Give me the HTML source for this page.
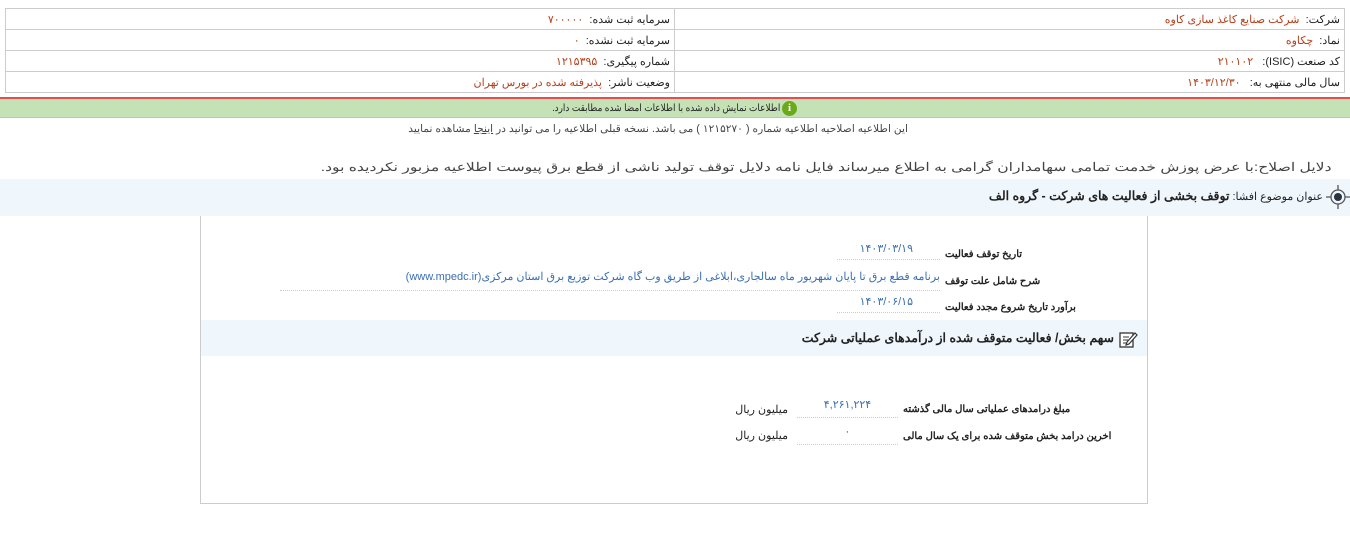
<!DOCTYPE html>
<html><head><meta charset="utf-8"><style>
*{margin:0;padding:0;box-sizing:border-box}
body{width:1350px;height:547px;background:#fff;position:relative;overflow:hidden;font-family:"Liberation Sans","Noto Sans CJK SC",sans-serif;font-size:11px;color:#222;direction:rtl}
.a{position:absolute;white-space:nowrap}
.r{color:#b5401a}
.b{color:#3a6fb0}
table.t{position:absolute;left:5px;top:8px;width:1340px;border-collapse:collapse}
table.t td{border:1px solid #ccc;height:21px;padding:0 4px;vertical-align:middle;font-size:11px}
.dot{border-bottom:1px dotted #ccc}
.lb{font-weight:bold;font-size:10px;direction:rtl}
</style></head><body>
<table class="t">
<tr><td style="width:670px">شرکت:&nbsp; <span class="r">شرکت صنایع کاغذ سازی کاوه</span></td><td>سرمایه ثبت شده:&nbsp; <span class="r">۷۰۰۰۰۰</span></td></tr>
<tr><td>نماد:&nbsp; <span class="r">چکاوه</span></td><td>سرمایه ثبت نشده:&nbsp; <span class="r">۰</span></td></tr>
<tr><td>کد صنعت (ISIC):&nbsp;&nbsp; <span class="r">۲۱۰۱۰۲</span></td><td>شماره پیگیری:&nbsp; <span class="r">۱۲۱۵۳۹۵</span></td></tr>
<tr><td>سال مالی منتهی به:&nbsp;&nbsp; <span class="r">۱۴۰۳/۱۲/۳۰</span></td><td>وضعیت ناشر:&nbsp; <span class="r">پذیرفته شده در بورس تهران</span></td></tr>
</table>
<div class="a" style="left:0;top:97px;width:1350px;height:2px;background:#e84c4c"></div>
<div class="a" style="left:0;top:99px;width:1350px;height:19px;background:#c4e2b6;border-bottom:1px solid #b0d0a0"></div>
<div class="a" style="left:782px;top:101px;width:15px;height:15px;border-radius:50%;background:#6aaa1a;color:#fff;font-weight:bold;font-size:11px;text-align:center;line-height:15px;font-family:'Liberation Serif',serif">i</div>
<div class="a" style="right:570px;top:101px;font-size:10px;line-height:15px;transform:scaleX(0.89);transform-origin:right center">اطلاعات نمایش داده شده با اطلاعات امضا شده مطابقت دارد.</div>
<div class="a" style="right:442px;top:122px;font-size:10.7px;color:#444">این اطلاعیه اصلاحیه اطلاعیه شماره ( ۱۲۱۵۲۷۰ ) می باشد. نسخه قبلی اطلاعیه را می توانید در <u>اینجا</u> مشاهده نمایید</div>
<div class="a" style="right:18px;top:160px;font-size:12px;color:#444;transform:scaleX(1.3);transform-origin:right center">دلایل اصلاح:با عرض پوزش خدمت تمامی سهامداران گرامی به اطلاع میرساند فایل نامه دلایل توقف تولید ناشی از قطع برق پیوست اطلاعیه مزبور نکردیده بود.</div>
<div class="a" style="left:0;top:179px;width:1350px;height:37px;background:#eff6fc"></div>
<svg class="a" style="left:1326px;top:185px" width="24" height="24" viewBox="0 0 24 24"><circle cx="12" cy="12" r="7" fill="none" stroke="#555" stroke-width="1.3"/><circle cx="12" cy="12" r="4" fill="#2a3340"/><path d="M12 0v5M12 19v5M0 12h5M19 12h5" stroke="#555" stroke-width="1.3"/></svg>
<div class="a" style="right:27px;top:188px;font-size:11px">عنوان موضوع افشا: <b style="font-size:12.5px">توقف بخشی از فعالیت های شرکت - گروه الف</b></div>
<div class="a" style="left:200px;top:216px;width:948px;height:288px;border:1px solid #ccc;border-top:none"></div>
<div class="a lb" style="left:945px;top:249px">تاریخ توقف فعالیت</div>
<div class="a b dot" style="left:837px;top:242px;width:103px;height:18px;text-align:right;padding-right:27px">۱۴۰۳/۰۳/۱۹</div>
<div class="a lb" style="left:945px;top:276px">شرح شامل علت توقف</div>
<div class="a b dot" style="left:280px;top:270px;width:660px;height:21px;text-align:right;padding-right:0">برنامه قطع برق تا پایان شهریور ماه سالجاری،ابلاغی از طریق وب گاه شرکت توزیع برق استان مرکزی(www.mpedc.ir)</div>
<div class="a lb" style="left:945px;top:302px">برآورد تاریخ شروع مجدد فعالیت</div>
<div class="a b dot" style="left:837px;top:295px;width:103px;height:18px;text-align:right;padding-right:27px">۱۴۰۳/۰۶/۱۵</div>
<div class="a" style="left:201px;top:320px;width:946px;height:36px;background:#eff6fc"></div>
<svg class="a" style="left:1118px;top:329px" width="20" height="20" viewBox="0 0 20 20"><rect x="2" y="4" width="13" height="14" fill="#fff" stroke="#333" stroke-width="1.3"/><path d="M5 8h6M5 11h5M5 14h4" stroke="#333"/><path d="M9 13l8-9 2 2-8 9-3 1z" fill="#fff" stroke="#333" stroke-width="1.2"/></svg>
<div class="a" style="right:236px;top:330px;font-weight:bold;font-size:12.5px">سهم بخش/ فعالیت متوقف شده از درآمدهای عملیاتی شرکت</div>
<div class="a lb" style="left:903px;top:404px">مبلغ درامدهای عملیاتی سال مالی گذشته</div>
<div class="a b dot" style="left:797px;top:398px;width:101px;height:20px;text-align:center">۴,۲۶۱,۲۲۴</div>
<div class="a" style="right:562px;top:403px">میلیون ریال</div>
<div class="a lb" style="left:903px;top:431px">اخرین درامد بخش متوقف شده برای یک سال مالی</div>
<div class="a b dot" style="left:797px;top:425px;width:101px;height:20px;text-align:center">۰</div>
<div class="a" style="right:562px;top:429px">میلیون ریال</div>
</body></html>
